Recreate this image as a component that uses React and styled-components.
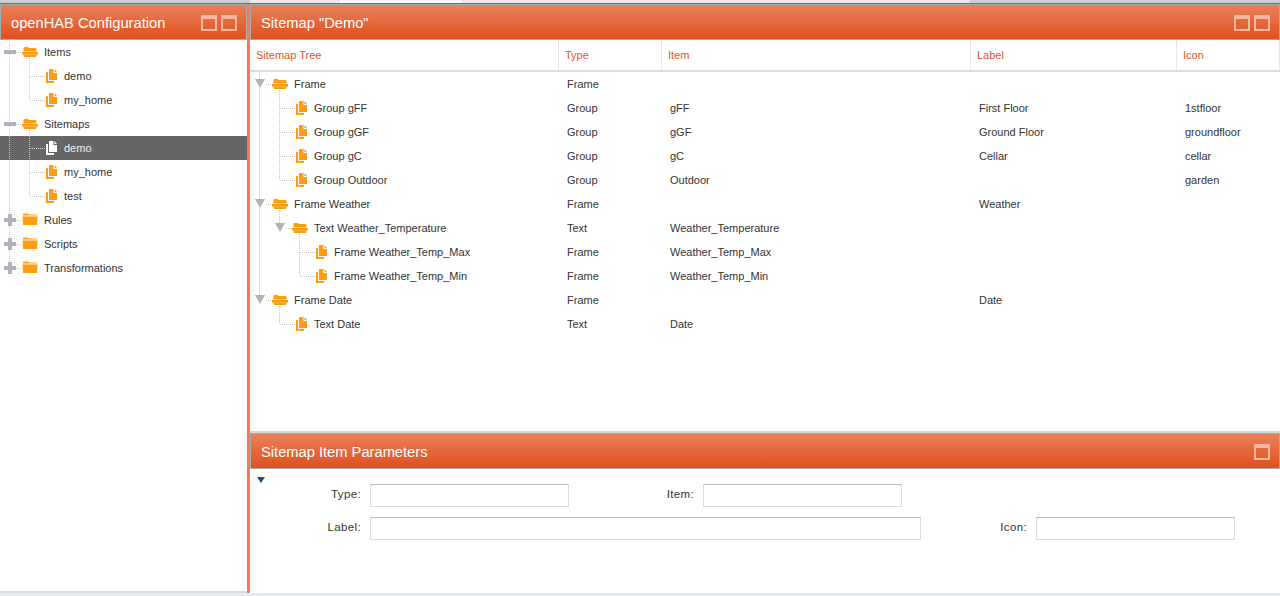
import React from "react";
import styled, { createGlobalStyle } from "styled-components";

const Global = createGlobalStyle`
  html, body { margin: 0; padding: 0; background: #fff; height: 100%; overflow: hidden; }
  #root { height: 100%; }
  * { box-sizing: border-box; }
`;

const cols = "309px 103px 309px 206px 103px";

const Page = styled.div`
  width: 1280px;
  height: 596px;
  display: flex;
  flex-direction: column;
  font-family: "Liberation Sans", Arial, sans-serif;
  font-size: 11px;
  color: #333;
  background: #e8ebee;
`;
const TopStrip = styled.div`
  height: 4px;
  flex: none;
  background: #ccd0d0;
  border-bottom: 1px solid #5f7a5a;
  display: flex;
`;
const StripTab = styled.div`
  width: ${p => p.$width}px;
  background: ${p => p.$color};
`;
const Body = styled.div`
  height: 589px;
  flex: none;
  display: flex;
`;
const LeftPanel = styled.div`
  width: 247px;
  flex: none;
  background: #fff;
  display: flex;
  flex-direction: column;
  border-bottom: 2px solid #d5dde2;
`;
const Splitter = styled.div`
  width: 3px;
  flex: none;
  background: #e8805c;
`;
const RightColumn = styled.div`
  width: 1030px;
  flex: none;
  display: flex;
  flex-direction: column;
`;
const Header = styled.div`
  height: 36px;
  flex: none;
  display: flex;
  align-items: center;
  justify-content: space-between;
  padding: 2px 9px 0 10px;
  background: linear-gradient(#e98159, #e04f1e);
  border: 1px solid #a3adb3;
  color: #fff;
  font-size: 14.7px;
`;
const HeaderTools = styled.div`
  display: flex;
  gap: 4px;
`;
const WinButton = styled.div`
  width: 16px;
  height: 16px;
  border: 2px solid #f5b9a3;
  border-top-width: 4px;
`;
const TreeRow = styled.div`
  position: relative;
  height: 24px;
  background: ${p => (p.$selected ? "#666" : "transparent")};
  color: ${p => (p.$selected ? "#eee" : "#333")};
  white-space: nowrap;
`;
const Guide = styled.svg`
  position: absolute;
  left: 0;
  top: 0;
  pointer-events: none;
`;
const RowIcon = styled.svg`
  position: absolute;
  top: 4px;
  left: ${p => p.$left}px;
`;
const RowLabel = styled.span`
  position: absolute;
  top: 6px;
  left: ${p => p.$left}px;
`;
const SitemapPanel = styled.div`
  height: 427px;
  flex: none;
  background: #fff;
  display: flex;
  flex-direction: column;
`;
const ColumnBar = styled.div`
  height: 32px;
  flex: none;
  display: grid;
  grid-template-columns: ${cols};
  border-bottom: 2px solid #d8dde0;
`;
const ColumnHead = styled.div`
  display: flex;
  align-items: center;
  padding-left: 6px;
  color: #e0562a;
  font-size: 11px;
  border-right: 1px solid #e6e8ea;
`;
const TreeGridBody = styled.div`
  flex: 1;
`;
const GridRow = styled.div`
  height: 24px;
  display: grid;
  grid-template-columns: ${cols};
  align-items: center;
`;
const Cell = styled.div`
  padding-left: 8px;
  white-space: nowrap;
`;
const ParamPanel = styled.div`
  flex: 1;
  border-top: 2px solid #d2d8db;
  background: #fff;
  display: flex;
  flex-direction: column;
`;
const ParamBody = styled.div`
  position: relative;
  flex: 1;
  display: flex;
  flex-direction: column;
  gap: 10px;
  padding-top: 15px;
`;
const ParamRow = styled.div`
  display: flex;
  height: 23px;
`;
const Collapse = styled.div`
  position: absolute;
  left: 7px;
  top: 8px;
  width: 0;
  height: 0;
  border-left: 4px solid transparent;
  border-right: 4px solid transparent;
  border-top: 6px solid #0b4ea2;
`;
const FieldLabel = styled.label`
  width: ${p => p.$width}px;
  display: flex;
  align-items: center;
  justify-content: flex-end;
  padding: 0 9px 4px 0;
  color: #333;
  font-size: 11.5px;
  letter-spacing: 0.35px;
`;
const Field = styled.div`
  width: ${p => p.$width}px;
  height: 23px;
  border: 1px solid #dcdcdc;
  border-top-color: #bbb;
  background: #fff;
`;

const FolderOpen = ({ left }) => (
  <RowIcon $left={left} width="18" height="16" viewBox="0 0 18 16">
    <path d="M1.5 4 Q1.5 3 2.5 3 L6 3 L7 4 L13.5 4 Q14.5 4 14.5 5 L14.5 7.4 L1.5 7.4 Z" fill="#ff9d0f" />
    <rect x="0" y="8" width="16" height="2.7" fill="#ff9d0f" />
    <path d="M1.5 10.7 L14.5 10.7 L14 13 L2 13 Z" fill="#ff9d0f" />
  </RowIcon>
);
const FolderClosed = ({ left }) => (
  <RowIcon $left={left} width="18" height="16" viewBox="0 0 18 16">
    <path d="M1 2.5 L1 1.5 L6 1.5 L7 2.5 L15 2.5 L15 3.6 L1 3.6 Z" fill="#ff9d0f" />
    <path d="M0.5 4.4 L15.5 4.4 L15 13 L1 13 Z" fill="#ff9d0f" />
  </RowIcon>
);
const Doc = ({ left, color = "#ff9d0f" }) => (
  <RowIcon $left={left} width="14" height="16" viewBox="0 0 14 16">
    <path d="M4 1 L8.5 1 L8.5 5 L12 5 L12 12 L4 12 Z M9.5 1 L12 3.9 L9.5 3.9 Z" fill={color} />
    <path d="M1 4 L3 4 L3 13 L9 13 L9 15 L1 15 Z" fill={color} />
  </RowIcon>
);
const PlusExp = ({ left }) => (
  <RowIcon $left={left} width="14" height="16" viewBox="0 0 14 16">
    <path d="M5 2 L9 2 L9 6 L13 6 L13 10 L9 10 L9 14 L5 14 L5 10 L1 10 L1 6 L5 6 Z" fill="#aeb4bf" />
  </RowIcon>
);
const MinusExp = ({ left }) => (
  <RowIcon $left={left} width="14" height="16" viewBox="0 0 14 16">
    <rect x="1" y="6" width="12" height="4" fill="#aeb4bf" />
  </RowIcon>
);
const TriExp = ({ left }) => (
  <RowIcon $left={left} width="14" height="16" viewBox="0 0 14 16">
    <path d="M2 3 L12 3 L7 12 Z" fill="#aeb4bf" />
  </RowIcon>
);

const dotted = { stroke: "#c4c4c4", strokeDasharray: "1 1" };
const Lines = ({ width, v = [], half = [], low = [], h }) => (
  <Guide width={width} height="24">
    {v.map(x => <line key={x} x1={x + 0.5} x2={x + 0.5} y1="0" y2="24" {...dotted} />)}
    {half.map(x => <line key={x} x1={x + 0.5} x2={x + 0.5} y1="0" y2="12" {...dotted} />)}
    {low.map(x => <line key={x} x1={x + 0.5} x2={x + 0.5} y1="12" y2="24" {...dotted} />)}
    <line x1={h[0]} x2={h[1]} y1="12.5" y2="12.5" {...dotted} stroke={h[2] || dotted.stroke} />
  </Guide>
);

const leftRows = [
  { t: "Items", kind: "minus", v: [9], low: [29] },
  { t: "demo", kind: "doc", v: [9, 29] },
  { t: "my_home", kind: "doc", v: [9], half: [29] },
  { t: "Sitemaps", kind: "minus", v: [9], low: [29] },
  { t: "demo", kind: "doc", v: [9, 29], sel: true },
  { t: "my_home", kind: "doc", v: [9, 29] },
  { t: "test", kind: "doc", v: [9], half: [29] },
  { t: "Rules", kind: "plus", v: [9] },
  { t: "Scripts", kind: "plus", v: [9] },
  { t: "Transformations", kind: "plus", half: [9] },
];

const gridRows = [
  { t: "Frame", d: 0, k: "tri", v: [9], low: [29], c: ["Frame", "", "", ""] },
  { t: "Group gFF", d: 1, v: [9, 29], c: ["Group", "gFF", "First Floor", "1stfloor"] },
  { t: "Group gGF", d: 1, v: [9, 29], c: ["Group", "gGF", "Ground Floor", "groundfloor"] },
  { t: "Group gC", d: 1, v: [9, 29], c: ["Group", "gC", "Cellar", "cellar"] },
  { t: "Group Outdoor", d: 1, v: [9], half: [29], c: ["Group", "Outdoor", "", "garden"] },
  { t: "Frame Weather", d: 0, k: "tri", v: [9], low: [29], c: ["Frame", "", "Weather", ""] },
  { t: "Text Weather_Temperature", d: 1, k: "tri", v: [9], half: [29], low: [49], c: ["Text", "Weather_Temperature", "", ""] },
  { t: "Frame Weather_Temp_Max", d: 2, v: [9, 49], c: ["Frame", "Weather_Temp_Max", "", ""] },
  { t: "Frame Weather_Temp_Min", d: 2, v: [9], half: [49], c: ["Frame", "Weather_Temp_Min", "", ""] },
  { t: "Frame Date", d: 0, k: "tri", half: [9], low: [29], c: ["Frame", "", "Date", ""] },
  { t: "Text Date", d: 1, half: [29], c: ["Text", "Date", "", ""] },
];

const Tree = () => (
  <div>
    {leftRows.map((r, i) => {
      const child = r.kind === "doc";
      const hx = child ? [30, 46] : [16, 22];
      return (
        <TreeRow key={i} $selected={r.sel}>
          <Lines width={247} v={r.v} half={r.half} low={r.low} h={[...hx, r.sel ? "#ddd" : undefined]} />
          {r.kind === "minus" && <MinusExp left={3} />}
          {r.kind === "plus" && <PlusExp left={3} />}
          {r.kind === "minus" && <FolderOpen left={22} />}
          {r.kind === "plus" && <FolderClosed left={22} />}
          {child && <Doc left={45} color={r.sel ? "#fff" : undefined} />}
          <RowLabel $left={child ? 64 : 44}>{r.t}</RowLabel>
        </TreeRow>
      );
    })}
  </div>
);

const stripTabs = [
  { width: 250, color: "#ccd0d0" },
  { width: 90, color: "#e8ebe8" },
  { width: 121, color: "#ffffff" },
  { width: 509, color: "#e8ebe8" },
];

export default function App() {
  return (
    <Page>
      <Global />
      <TopStrip>
        {stripTabs.map((s, i) => <StripTab key={i} $width={s.width} $color={s.color} />)}
      </TopStrip>
      <Body>
        <LeftPanel>
          <Header>
            openHAB Configuration
            <HeaderTools>
              <WinButton />
              <WinButton />
            </HeaderTools>
          </Header>
          <Tree />
        </LeftPanel>
        <Splitter />
        <RightColumn>
          <SitemapPanel>
            <Header>
              Sitemap "Demo"
              <HeaderTools>
                <WinButton />
                <WinButton />
              </HeaderTools>
            </Header>
            <ColumnBar>
              <ColumnHead>Sitemap Tree</ColumnHead>
              <ColumnHead>Type</ColumnHead>
              <ColumnHead>Item</ColumnHead>
              <ColumnHead>Label</ColumnHead>
              <ColumnHead>Icon</ColumnHead>
            </ColumnBar>
            <TreeGridBody>
              {gridRows.map((r, i) => {
                const iconLeft = r.k ? 22 + r.d * 20 : 45 + (r.d - 1) * 20;
                const textLeft = 44 + r.d * 20;
                const hx = r.k ? [16 + r.d * 20, 22 + r.d * 20] : [30 + (r.d - 1) * 20, 46 + (r.d - 1) * 20];
                return (
                  <GridRow key={i}>
                    <TreeRow>
                      <Lines width={308} v={r.v} half={r.half} low={r.low} h={hx} />
                      {r.k && <TriExp left={3 + r.d * 20} />}
                      {r.k ? <FolderOpen left={iconLeft} /> : <Doc left={iconLeft} />}
                      <RowLabel $left={textLeft}>{r.t}</RowLabel>
                    </TreeRow>
                    <Cell>{r.c[0]}</Cell>
                    <Cell>{r.c[1]}</Cell>
                    <Cell>{r.c[2]}</Cell>
                    <Cell>{r.c[3]}</Cell>
                  </GridRow>
                );
              })}
            </TreeGridBody>
          </SitemapPanel>
          <ParamPanel>
            <Header>
              Sitemap Item Parameters
              <HeaderTools>
                <WinButton />
              </HeaderTools>
            </Header>
            <ParamBody>
              <Collapse />
              <ParamRow>
                <FieldLabel $width={120}>Type:</FieldLabel>
                <Field $width={199} />
                <FieldLabel $width={134}>Item:</FieldLabel>
                <Field $width={199} />
              </ParamRow>
              <ParamRow>
                <FieldLabel $width={120}>Label:</FieldLabel>
                <Field $width={551} />
                <FieldLabel $width={115}>Icon:</FieldLabel>
                <Field $width={199} />
              </ParamRow>
            </ParamBody>
          </ParamPanel>
        </RightColumn>
      </Body>
    </Page>
  );
}
